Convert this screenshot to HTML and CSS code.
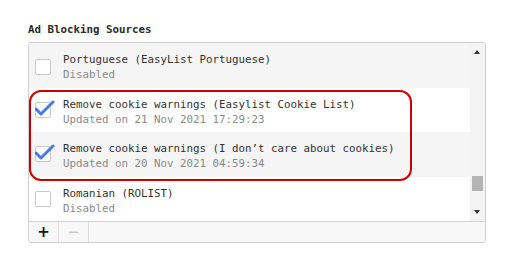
FILE: index.html
```html
<!DOCTYPE html>
<html lang="en">
<head>
  <meta charset="UTF-8">
  <meta name="viewport" content="width=device-width, initial-scale=1.0">
  <title>Ad Blocking Sources</title>
  <link rel="stylesheet" href="styles.css">
</head>
<body>
  <div class="panel">
    <h3 class="panel-title">Ad Blocking Sources</h3>

    <div class="sources">
      <div class="sources-body">
        <!-- List of filter lists -->
        <div class="list">
          <div class="item odd">
            <span class="check"></span>
            <div class="info">
              <div class="name">Portuguese (EasyList Portuguese)</div>
              <div class="status">Disabled</div>
            </div>
          </div>

          <div class="item">
            <span class="check checked">
              <svg width="20" height="18" viewBox="0 0 20 18"><path d="M1 9 L6 14 L18 2" fill="none" stroke="#4a78e6" stroke-width="3" stroke-linecap="round" stroke-linejoin="round"/></svg>
            </span>
            <div class="info">
              <div class="name">Remove cookie warnings (Easylist Cookie List)</div>
              <div class="status">Updated on 21 Nov 2021 17:29:23</div>
            </div>
          </div>

          <div class="item odd">
            <span class="check checked">
              <svg width="20" height="18" viewBox="0 0 20 18"><path d="M1 9 L6 14 L18 2" fill="none" stroke="#4a78e6" stroke-width="3" stroke-linecap="round" stroke-linejoin="round"/></svg>
            </span>
            <div class="info">
              <div class="name">Remove cookie warnings (I don’t care about cookies)</div>
              <div class="status">Updated on 20 Nov 2021 04:59:34</div>
            </div>
          </div>

          <div class="item">
            <span class="check"></span>
            <div class="info">
              <div class="name">Romanian (ROLIST)</div>
              <div class="status">Disabled</div>
            </div>
          </div>
        </div>

        <!-- Scrollbar -->
        <div class="scrollbar">
          <span class="arrow up"></span>
          <span class="thumb"></span>
          <span class="arrow down"></span>
        </div>

        <!-- Highlight around the cookie lists -->
        <div class="highlight"></div>
      </div>

      <div class="toolbar">
        <button class="tool add">+</button>
        <button class="tool remove">−</button>
      </div>
    </div>
  </div>
</body>
</html>
```

FILE: styles.css
```css
body {
  margin: 0;
  background: #fff;
  font-family: "DejaVu Sans Mono", monospace;
  font-size: 10.8px;
  color: #333;
}

.panel {
  padding: 22px 0 0 28px;
}

.panel-title {
  margin: 0 0 5px 0;
  font-size: 10.8px;
  line-height: 15px;
  font-weight: bold;
  color: #2b2b2b;
}

.sources {
  width: 456px;
  border: 1px solid #cfcfcf;
  border-radius: 3px;
}

.sources-body {
  position: relative;
  display: flex;
  height: 178px;
}

.list {
  flex: 1;
}

.item {
  display: flex;
  align-items: center;
  height: 44.5px;
  padding-left: 6px;
  background: #fff;
}

.item.odd {
  background: #f5f5f5;
}

.check {
  position: relative;
  width: 14px;
  height: 14px;
  border: 1px solid #c9c9c9;
  border-radius: 2px;
  background: #fff;
  margin-right: 12px;
  flex-shrink: 0;
}

.check svg {
  position: absolute;
  left: -1px;
  top: -3px;
}

.item:first-child .check {
  margin-top: 3px;
}

.info {
  padding-top: 4px;
}

.name {
  line-height: 15px;
  color: #333;
}

.status {
  line-height: 15px;
  color: #8a8a8a;
}

.scrollbar {
  width: 15px;
  background: #f3f3f3;
  position: relative;
}

.arrow {
  position: absolute;
  left: 4px;
  width: 0;
  height: 0;
  border-left: 3.5px solid transparent;
  border-right: 3.5px solid transparent;
}

.arrow.up {
  top: 7px;
  border-bottom: 4px solid #333;
}

.arrow.down {
  bottom: 7px;
  border-top: 4px solid #333;
}

.thumb {
  position: absolute;
  left: 2px;
  top: 133px;
  width: 11px;
  height: 15px;
  background: #b4b4b4;
}

.highlight {
  position: absolute;
  left: 0;
  top: 47px;
  width: 379px;
  height: 87px;
  border: 2px solid #cc0000;
  border-radius: 12px;
}

.toolbar {
  display: flex;
  height: 20px;
  border-top: 1px solid #d4d4d4;
  background: #f8f8f8;
  border-radius: 0 0 3px 3px;
}

.tool {
  width: 30px;
  height: 20px;
  padding: 0;
  border: none;
  border-right: 1px solid #dcdcdc;
  background: transparent;
  font-family: "DejaVu Sans", sans-serif;
  font-size: 15px;
  line-height: 20px;
}

.tool.add {
  color: #111;
  font-weight: bold;
}

.tool.remove {
  color: #c8c8c8;
}
```
